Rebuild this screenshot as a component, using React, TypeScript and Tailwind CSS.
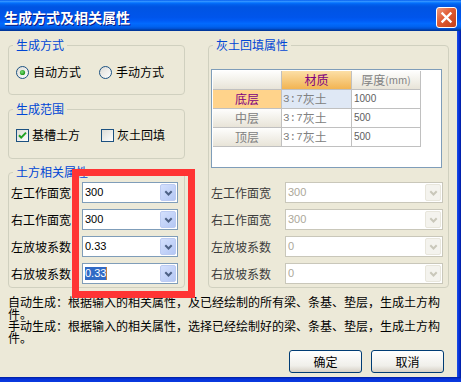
import React from "react";

function Radio({ checked }: { checked?: boolean }) {
  return (
    <svg width="13" height="13" viewBox="0 0 13 13">
      <defs>
        <linearGradient id="rg" x1="0" y1="0" x2="1" y2="1">
          <stop offset="0" stopColor="#dcdbd5" />
          <stop offset="1" stopColor="#ffffff" />
        </linearGradient>
        <radialGradient id="rd" cx="0.4" cy="0.4" r="0.6">
          <stop offset="0" stopColor="#7be078" />
          <stop offset="1" stopColor="#1c9417" />
        </radialGradient>
      </defs>
      <circle cx="6.5" cy="6.5" r="6" fill="url(#rg)" stroke="#1c5180" strokeWidth="1" />
      {checked && <circle cx="6.5" cy="6.5" r="2.6" fill="url(#rd)" />}
    </svg>
  );
}

function Check({ checked }: { checked?: boolean }) {
  return (
    <svg width="13" height="13" viewBox="0 0 13 13">
      <defs>
        <linearGradient id="cg" x1="0" y1="0" x2="1" y2="1">
          <stop offset="0" stopColor="#dcdbd5" />
          <stop offset="1" stopColor="#ffffff" />
        </linearGradient>
      </defs>
      <rect x="0.5" y="0.5" width="12" height="12" fill="url(#cg)" stroke="#1c5180" strokeWidth="1" />
      {checked && (
        <path d="M3 6.2 L5.2 8.6 L10 3.6" fill="none" stroke="#21a121" strokeWidth="2" />
      )}
    </svg>
  );
}

function Chevron({ color }: { color: string }) {
  return (
    <svg width="9" height="6" viewBox="0 0 9 6">
      <path d="M1.3 1.3 L4.5 4.5 L7.7 1.3" fill="none" stroke={color} strokeWidth="2" />
    </svg>
  );
}

function Combo({ value, selected }: { value: string; selected?: boolean }) {
  return (
    <div className="flex h-[21px] w-[96px] items-center border border-[#7f9db9] bg-white p-[1px]">
      <div className="flex flex-1 items-center pl-[1px] font-['Liberation_Sans',sans-serif] text-[11px] leading-[13px] text-black">
        {selected ? (
          <>
            <span className="bg-[#316ac5] text-white">{value}</span>
            <span className="h-[13px] w-[1px] bg-[#c08040]" />
          </>
        ) : (
          value
        )}
      </div>
      <div className="flex h-[17px] w-[16px] items-center justify-center rounded-[2px] border border-[#bccbf2] bg-[linear-gradient(135deg,#d4e0fd,#b4c7f4)]">
        <Chevron color="#4d6185" />
      </div>
    </div>
  );
}

function DisabledCombo({ value }: { value: string }) {
  return (
    <div className="flex h-[21px] w-[158px] items-center border border-[#c9c7ba] bg-white p-[1px]">
      <div className="flex flex-1 items-center pl-[1px] font-['Liberation_Sans',sans-serif] text-[11px] leading-[13px] text-[#aca899]">
        {value}
      </div>
      <div className="flex h-[17px] w-[16px] items-center justify-center rounded-[2px] border border-[#e8e6dc] bg-[#f4f3ee]">
        <Chevron color="#c9c7ba" />
      </div>
    </div>
  );
}

const headCell =
  "flex items-center justify-center border-b border-r border-[#c0c0c0] bg-[linear-gradient(#fefefd,#e8e4d8)] text-[#808080]";
const dataCell =
  "flex items-center border-b border-r border-[#c0c0c0] bg-white pl-[2px] text-[#808080]";

function Mix() {
  return (
    <>
      <span className="font-['Liberation_Mono',monospace] text-[11px]">3:7</span>
      <span>灰土</span>
    </>
  );
}

export default function App() {
  const leftRows: [string, string, boolean][] = [
    ["左工作面宽", "300", false],
    ["右工作面宽", "300", false],
    ["左放坡系数", "0.33", false],
    ["右放坡系数", "0.33", true],
  ];
  const rightRows: [string, string][] = [
    ["左工作面宽", "300"],
    ["右工作面宽", "300"],
    ["左放坡系数", "0"],
    ["右放坡系数", "0"],
  ];
  return (
    <div className="relative flex h-[382px] w-[461px] flex-col overflow-hidden bg-[#0831d9] font-['Noto_Sans_CJK_SC','Noto_Sans',sans-serif] text-[12px] leading-[12px] text-black">
      {/* Title bar */}
      <div className="flex h-[31px] shrink-0 items-center justify-between bg-[linear-gradient(180deg,#0058ee_0%,#3593ff_4%,#288eff_6%,#127dff_8%,#036ffc_10%,#0262ee_14%,#0057e5_20%,#0054e3_24%,#0055eb_56%,#005bf5_66%,#026afe_76%,#0062ef_86%,#0052d6_92%,#0040ab_96%,#003092_100%)] pl-[4px] pr-[4px] pt-[3px]">
        <span className="text-[14px] font-bold leading-[14px] text-white [text-shadow:1px_1px_#0a1883]">
          生成方式及相关属性
        </span>
        <div className="flex h-[21px] w-[21px] items-center justify-center rounded-[3px] border border-white bg-[linear-gradient(135deg,#f09a7c,#e05a32_45%,#c2401a)]">
          <svg width="13" height="13" viewBox="0 0 13 13">
            <path d="M2.5 2.5 L10.5 10.5 M10.5 2.5 L2.5 10.5" stroke="white" strokeWidth="2.4" strokeLinecap="square" />
          </svg>
        </div>
      </div>

      <div className="flex flex-1">
        {/* Client area */}
        <div className="flex flex-1 flex-col bg-[#ece9d8] pl-[8px] pt-[8px]">
          <div className="flex items-start gap-[23px]">
            {/* Left column */}
            <div className="flex w-[177px] flex-col">
              <fieldset className="rounded-[4px] border border-[#d0d0bf]">
                <legend className="ml-[4px] px-[3px] leading-[12px] text-[#0046d5]">生成方式</legend>
                <div className="mb-[15px] mt-[14px] flex h-[14px] items-center pl-[7px]">
                  <Radio checked />
                  <span className="ml-[4px]">自动方式</span>
                  <span className="ml-[18px] flex items-center">
                    <Radio />
                  </span>
                  <span className="ml-[4px]">手动方式</span>
                </div>
              </fieldset>

              <fieldset className="mt-[8px] rounded-[4px] border border-[#d0d0bf]">
                <legend className="ml-[4px] px-[3px] leading-[12px] text-[#0046d5]">生成范围</legend>
                <div className="mb-[16px] mt-[13px] flex h-[14px] items-center pl-[7px]">
                  <Check checked />
                  <span className="ml-[3px]">基槽土方</span>
                  <span className="ml-[21px] flex items-center">
                    <Check />
                  </span>
                  <span className="ml-[3px]">灰土回填</span>
                </div>
              </fieldset>

              <fieldset className="mt-[7px] rounded-[4px] border border-[#d0d0bf]">
                <legend className="ml-[4px] px-[3px] leading-[12px] text-[#0046d5]">土方相关属性</legend>
                <div className="mb-[3px] mt-[4px] flex flex-col gap-[6px] pl-[2px]">
                  {leftRows.map(([label, v, sel]) => (
                    <div key={label} className="flex items-center">
                      <span className="w-[71px]">{label}</span>
                      <Combo value={v} selected={sel} />
                    </div>
                  ))}
                </div>
              </fieldset>
            </div>

            {/* Right column */}
            <fieldset className="w-[241px] rounded-[4px] border border-[#d0d0bf]">
              <legend className="ml-[4px] px-[3px] leading-[12px] text-[#0046d5]">灰土回填属性</legend>
              <div className="mb-[3px] mt-[18px] flex flex-col pl-[2px]">
                <div className="h-[99px] w-[231px] border border-[#7f9db9] bg-white p-[1px]">
                  <div className="grid grid-cols-[69px_70px_69px] grid-rows-[19px_19px_19px_19px]">
                    <div className={headCell} />
                    <div className="flex items-center justify-center border-b border-r border-[#c0c0c0] bg-[linear-gradient(#fcdfa6,#f2b452)] text-[#800080]">
                      材质
                    </div>
                    <div className={headCell}>
                      厚度<span className="text-[10px]">(mm)</span>
                    </div>

                    <div className="flex items-center justify-center border-b border-r border-[#c0c0c0] bg-[#ffd38b] text-[#800080]">
                      底层
                    </div>
                    <div className="flex items-center border-b border-r border-[#c0c0c0] bg-[#dfe8f5] pl-[1px] text-[#808080]">
                      <Mix />
                    </div>
                    <div className={dataCell}>
                      <span className="font-['Liberation_Sans',sans-serif] text-[10px] text-[#606060]">1000</span>
                    </div>

                    <div className={headCell}>中层</div>
                    <div className="flex items-center border-b border-r border-[#c0c0c0] bg-white pl-[1px] text-[#808080]">
                      <Mix />
                    </div>
                    <div className={dataCell}>
                      <span className="font-['Liberation_Sans',sans-serif] text-[10px] text-[#606060]">500</span>
                    </div>

                    <div className={headCell}>顶层</div>
                    <div className="flex items-center border-b border-r border-[#c0c0c0] bg-white pl-[1px] text-[#808080]">
                      <Mix />
                    </div>
                    <div className={dataCell}>
                      <span className="font-['Liberation_Sans',sans-serif] text-[10px] text-[#606060]">500</span>
                    </div>
                  </div>
                </div>
                <div className="mt-[14px] flex flex-col gap-[6px]">
                  {rightRows.map(([label, v]) => (
                    <div key={label} className="flex items-center">
                      <span className="w-[74px] text-[#3c3c3c]">{label}</span>
                      <DisabledCombo value={v} />
                    </div>
                  ))}
                </div>
              </div>
            </fieldset>
          </div>

          {/* Description */}
          <div className="mt-[8px] flex flex-col whitespace-nowrap leading-[12px]">
            <div>自动生成：根据输入的相关属性，及已经绘制的所有梁、条基、垫层，生成土方构</div>
            <div>件。</div>
            <div>手动生成：根据输入的相关属性，选择已经绘制好的梁、条基、垫层，生成土方构</div>
            <div>件。</div>
          </div>

          {/* Buttons */}
          <div className="mt-[6px] flex justify-end gap-[9px] pr-[13px]">
            <button className="flex h-[23px] w-[73px] items-center justify-center rounded-[3px] border border-[#003c74] bg-[linear-gradient(#ffffff,#f0efea_70%,#d6d0c5)] text-[12px] leading-[12px]">
              确定
            </button>
            <button className="flex h-[23px] w-[73px] items-center justify-center rounded-[3px] border border-[#003c74] bg-[linear-gradient(#ffffff,#f0efea_70%,#d6d0c5)] text-[12px] leading-[12px]">
              取消
            </button>
          </div>
        </div>
        {/* right frame border */}
        <div className="w-[4px] bg-[linear-gradient(to_right,#1a4ee6,#0831d9,#001ea0)]" />
      </div>
      {/* bottom frame border */}
      <div className="h-[5px] shrink-0 bg-[linear-gradient(#001ea0,#0831d9_40%,#0a3be0)]" />

      {/* Red highlight overlay */}
      <div className="pointer-events-none absolute left-[72px] top-[169px] h-[129px] w-[123px] border-[7px] border-[#ff3434]" />
    </div>
  );
}
